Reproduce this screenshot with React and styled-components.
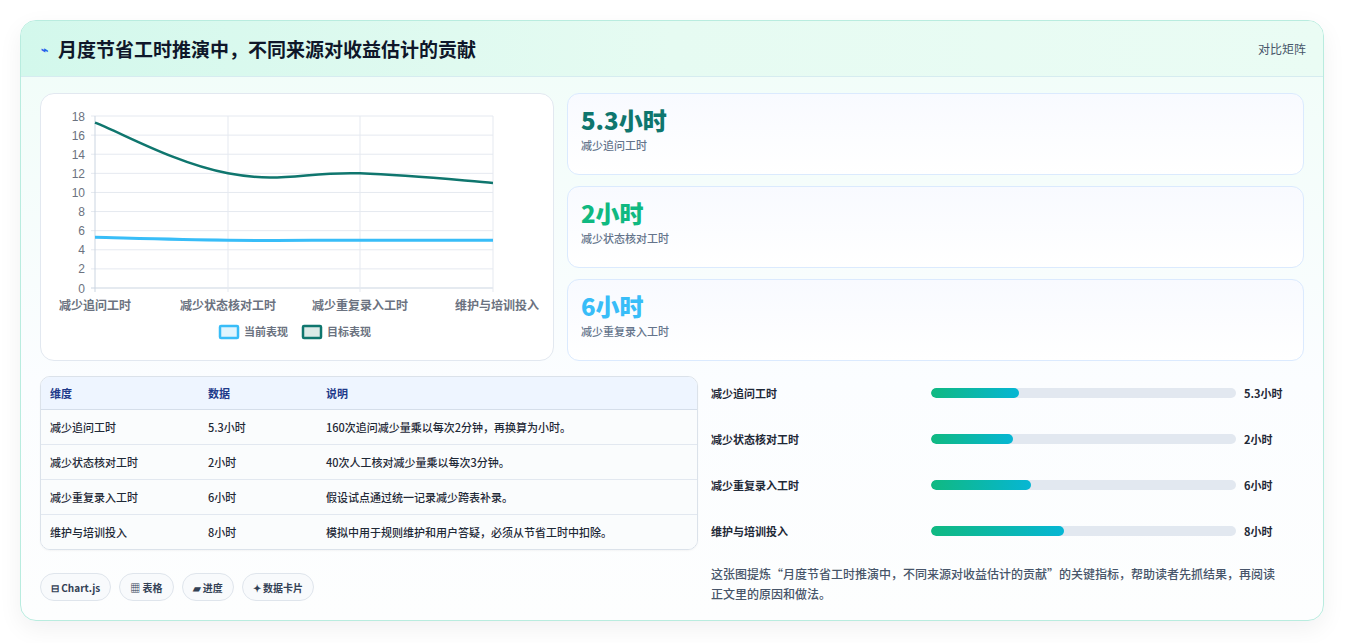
import styled, { createGlobalStyle } from "styled-components";

const Global = createGlobalStyle`
  body { margin: 0; background: #fff; font-family: "Noto Sans CJK SC", "Noto Sans", sans-serif; color: #1e293b; }
`;

const Page = styled.div`
  padding: 20px 21px 22px 20px;
`;

const Card = styled.section`
  border: 1px solid #b9ecdf;
  border-radius: 16px;
  background: linear-gradient(180deg, #f0fdf8 0%, #fbfdff 60%, #fdfefe 100%);
  box-shadow: 0 8px 24px rgba(15, 23, 42, 0.06);
  overflow: hidden;
`;

const Header = styled.header`
  height: 55px;
  display: flex;
  align-items: center;
  justify-content: space-between;
  padding: 0 20px;
  background: linear-gradient(90deg, #d3f8ec 0%, #e6fbf2 50%, #eafcf4 100%);
  border-bottom: 1px solid #d6ecf0;
`;

const Title = styled.h1`
  margin: 0;
  font-size: 19px;
  font-weight: 700;
  color: #0f172a;
  display: flex;
  align-items: center;
  gap: 10px;
  span { color: #2563eb; font-size: 12px; }
`;

const HeaderTag = styled.div`
  font-size: 12px;
  color: #475569;
  margin-right: -3px;
`;

const Body = styled.div`
  padding: 16px 19px 16px 19px;
  display: flex;
  flex-direction: column;
  gap: 15px;
`;

const TopRow = styled.div`
  display: grid;
  grid-template-columns: 514px 1fr;
  gap: 13px;
`;

const ChartCard = styled.div`
  background: #fff;
  border: 1px solid #e2e8f0;
  border-radius: 14px;
  height: 268px;
  box-sizing: border-box;
`;

const Stats = styled.div`
  display: flex;
  flex-direction: column;
  gap: 11px;
`;

const Stat = styled.div`
  height: 82px;
  box-sizing: border-box;
  border: 1px solid #dbeafe;
  border-radius: 12px;
  background: linear-gradient(180deg, #f8faff, #ffffff);
  padding: 9px 13px;
`;

const StatValue = styled.div`
  font-size: 24px;
  font-weight: 800;
  line-height: 34px;
  color: ${(p) => p.$color};
`;

const StatLabel = styled.div`
  font-size: 11px;
  font-weight: 500;
  color: #64748b;
`;

const BottomRow = styled.div`
  display: grid;
  grid-template-columns: 658px 1fr;
  gap: 12px;
`;

const LeftCol = styled.div`
  display: flex;
  flex-direction: column;
  gap: 23px;
`;

const Table = styled.table`
  width: 100%;
  border-collapse: separate;
  border-spacing: 0;
  border: 1px solid #dbe2ea;
  border-radius: 10px;
  overflow: hidden;
  font-size: 11px;
  box-shadow: 0 1px 2px rgba(0,0,0,0.04);
  th {
    background: #eef5ff;
    color: #1e3a8a;
    text-align: left;
    font-weight: 600;
    height: 32px;
    padding: 0 9px;
    border-bottom: 1px solid #d5deea;
  }
  td {
    height: 34px;
    padding: 0 9px;
    color: #1f2937;
    font-weight: 500;
    border-bottom: 1px solid #e2e8f0;
    background: #fafcfd;
  }
  tr:last-child td { border-bottom: none; }
`;

const Chips = styled.div`
  display: flex;
  gap: 8px;
`;

const Chip = styled.div`
  height: 28px;
  box-sizing: border-box;
  padding: 0 10px;
  border: 1px solid #dfe5ec;
  border-radius: 14px;
  background: #f8fafc;
  font-size: 10px;
  font-weight: 600;
  color: #334155;
  display: flex;
  align-items: center;
  gap: 3px;
`;

const RightCol = styled.div`
  padding-left: 1px;
  display: flex;
  flex-direction: column;
`;

const BarRow = styled.div`
  display: grid;
  grid-template-columns: 220px 1fr 60px;
  align-items: center;
  height: 46px;
  font-size: 11px;
  font-weight: 600;
  color: #1f2937;
  &:first-child { margin-top: -6px; }
`;

const Track = styled.div`
  height: 10px;
  border-radius: 5px;
  background: #e2e8f0;
  margin-right: 8px;
  overflow: hidden;
`;

const Fill = styled.div`
  height: 100%;
  border-radius: 5px;
  background: linear-gradient(90deg, #10b981, #06b6d4);
`;

const Note = styled.p`
  margin: 10px 0 0;
  font-size: 12px;
  font-weight: 500;
  line-height: 20px;
  color: #475569;
  padding-right: 24px;
`;

const X = [94 - 40, 227 - 40, 359 - 40, 492 - 40];
const y = (v) => 287 - 93 - v * (172 / 18);

function path(vals) {
  const p = vals.map((v, i) => [X[i], y(v)]);
  let d = `M${p[0][0]},${p[0][1]}`;
  for (let i = 0; i < p.length - 1; i++) {
    const p0 = p[i - 1] || p[i];
    const p1 = p[i];
    const p2 = p[i + 1];
    const p3 = p[i + 2] || p2;
    const t = 0.2;
    d += ` C${p1[0] + (p2[0] - p0[0]) * t},${p1[1] + (p2[1] - p0[1]) * t} ${p2[0] - (p3[0] - p1[0]) * t},${p2[1] - (p3[1] - p1[1]) * t} ${p2[0]},${p2[1]}`;
  }
  return d;
}

function LineChart() {
  const ticks = [0, 2, 4, 6, 8, 10, 12, 14, 16, 18];
  const labels = ["减少追问工时", "减少状态核对工时", "减少重复录入工时", "维护与培训投入"];
  const font = "Liberation Sans, Noto Sans CJK SC, sans-serif";
  return (
    <svg width="514" height="267" viewBox="0 0 514 267">
      {ticks.map((t) => (
        <g key={t}>
          <line x1={X[0] - 4} x2={X[3]} y1={y(t)} y2={y(t)} stroke={t === 0 ? "#cbd5e1" : "#e5e9f0"} />
          <text x={X[0] - 10} y={y(t) + 4.5} textAnchor="end" fontSize="12" fill="#6b7280" fontFamily={font}>{t}</text>
        </g>
      ))}
      {X.map((x, i) => (
        <line key={i} x1={x} x2={x} y1={y(18)} y2={y(0) + 4} stroke={i === 0 ? "#cbd5e1" : "#e5e9f0"} />
      ))}
      {labels.map((l, i) => (
        <text key={l} x={i === 3 ? 498 : X[i]} y={y(0) + 22} textAnchor={i === 3 ? "end" : "middle"} fontSize="12" fontWeight="600" fill="#6b7280" fontFamily={font}>{l}</text>
      ))}
      <path d={path([17.3, 12, 12, 11])} fill="none" stroke="#0f766e" strokeWidth="2.5" />
      <path d={path([5.3, 5, 5, 5])} fill="none" stroke="#38bdf8" strokeWidth="3" />
      <rect x="179" y="232" width="18" height="12" fill="#e0f5fe" stroke="#38bdf8" strokeWidth="2.5" rx="1" />
      <text x="203" y="242" fontSize="11" fontWeight="600" fill="#6b7280" fontFamily={font}>当前表现</text>
      <rect x="262" y="232" width="18" height="12" fill="#dbeae7" stroke="#0f766e" strokeWidth="2.5" rx="1" />
      <text x="286" y="242" fontSize="11" fontWeight="600" fill="#6b7280" fontFamily={font}>目标表现</text>
    </svg>
  );
}

const stats = [
  { v: "5.3小时", l: "减少追问工时", c: "#0f766e" },
  { v: "2小时", l: "减少状态核对工时", c: "#10b981" },
  { v: "6小时", l: "减少重复录入工时", c: "#38bdf8" },
];

const rows = [
  ["减少追问工时", "5.3小时", "160次追问减少量乘以每次2分钟，再换算为小时。", 28.7],
  ["减少状态核对工时", "2小时", "40次人工核对减少量乘以每次3分钟。", 27],
  ["减少重复录入工时", "6小时", "假设试点通过统一记录减少跨表补录。", 32.7],
  ["维护与培训投入", "8小时", "模拟中用于规则维护和用户答疑，必须从节省工时中扣除。", 43.6],
];

export default function App() {
  return (
    <Page>
      <Global />
      <Card>
        <Header>
          <Title><span>⌁</span>月度节省工时推演中，不同来源对收益估计的贡献</Title>
          <HeaderTag>对比矩阵</HeaderTag>
        </Header>
        <Body>
          <TopRow>
            <ChartCard><LineChart /></ChartCard>
            <Stats>
              {stats.map((s) => (
                <Stat key={s.l}>
                  <StatValue $color={s.c}>{s.v}</StatValue>
                  <StatLabel>{s.l}</StatLabel>
                </Stat>
              ))}
            </Stats>
          </TopRow>
          <BottomRow>
            <LeftCol>
              <Table>
                <thead>
                  <tr><th style={{ width: 140 }}>维度</th><th style={{ width: 100 }}>数据</th><th>说明</th></tr>
                </thead>
                <tbody>
                  {rows.map((r) => (
                    <tr key={r[0]}><td>{r[0]}</td><td>{r[1]}</td><td>{r[2]}</td></tr>
                  ))}
                </tbody>
              </Table>
              <Chips>
                <Chip>⊟ Chart.js</Chip>
                <Chip>▦ 表格</Chip>
                <Chip>▰ 进度</Chip>
                <Chip>✦ 数据卡片</Chip>
              </Chips>
            </LeftCol>
            <RightCol>
              {rows.map((r) => (
                <BarRow key={r[0]}>
                  <span>{r[0]}</span>
                  <Track><Fill style={{ width: `${r[3]}%` }} /></Track>
                  <span>{r[1]}</span>
                </BarRow>
              ))}
              <Note>这张图提炼“月度节省工时推演中，不同来源对收益估计的贡献”的关键指标，帮助读者先抓结果，再阅读正文里的原因和做法。</Note>
            </RightCol>
          </BottomRow>
        </Body>
      </Card>
    </Page>
  );
}
